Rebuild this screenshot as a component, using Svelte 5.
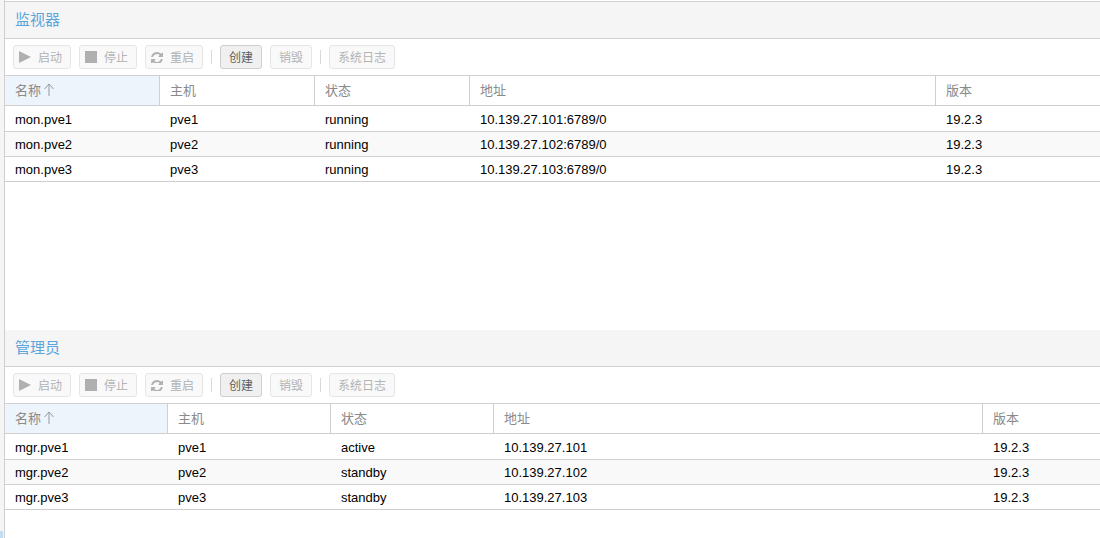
<script>
  const toolbar = [
    { label: '启动', icon: 'play', w: 58 },
    { label: '停止', icon: 'stop', w: 58 },
    { label: '重启', icon: 'refresh', w: 58 },
    { sep: true },
    { label: '创建', active: true, w: 42 },
    { label: '销毁', w: 42 },
    { sep: true },
    { label: '系统日志', w: 66 }
  ];

  const heads = ['名称', '主机', '状态', '地址', '版本'];

  const panels = [
    {
      title: '监视器',
      first: true,
      cols: '155px 155px 155px 466px 1fr',
      height: 330,
      rows: [
        ['mon.pve1', 'pve1', 'running', '10.139.27.101:6789/0', '19.2.3'],
        ['mon.pve2', 'pve2', 'running', '10.139.27.102:6789/0', '19.2.3'],
        ['mon.pve3', 'pve3', 'running', '10.139.27.103:6789/0', '19.2.3']
      ]
    },
    {
      title: '管理员',
      first: false,
      cols: '163px 163px 163px 489px 1fr',
      height: 208,
      rows: [
        ['mgr.pve1', 'pve1', 'active', '10.139.27.101', '19.2.3'],
        ['mgr.pve2', 'pve2', 'standby', '10.139.27.102', '19.2.3'],
        ['mgr.pve3', 'pve3', 'standby', '10.139.27.103', '19.2.3']
      ]
    }
  ];
</script>

<div class="page">
  <div class="edge"><div class="edge-mark"></div></div>
  <div class="content">
    {#each panels as panel}
      <section class="panel" class:first={panel.first} style="height: {panel.height}px; --cols: {panel.cols}">
        <h2 class="title">{panel.title}</h2>
        <div class="toolbar">
          {#each toolbar as item}
            {#if item.sep}
              <span class="sep"></span>
            {:else}
              <button class="btn" class:active={item.active} class:plain={!item.icon} style="width: {item.w}px">
                {#if item.icon === 'play'}
                  <svg width="12" height="12" viewBox="0 0 12 12"><path d="M0 0 L12 6 L0 12 Z" fill="#b0b0b0" /></svg>
                {:else if item.icon === 'stop'}
                  <svg width="12" height="12" viewBox="0 0 12 12"><rect width="12" height="12" fill="#b0b0b0" /></svg>
                {:else if item.icon === 'refresh'}
                  <svg width="12" height="12" viewBox="0 0 1536 1536"><path transform="translate(0 1408) scale(1 -1) translate(0 -128)" d="M1511 480q0 -5 -1 -7q-64 -268 -268 -434.5t-478 -166.5q-146 0 -282.5 55t-243.5 157l-129 -129q-19 -19 -45 -19t-45 19t-19 45v448q0 26 19 45t45 19h448q26 0 45 -19t19 -45t-19 -45l-137 -137q71 -66 161 -102t187 -36q134 0 250 65t186 179q11 17 53 117q8 23 30 23h192q13 0 22.500 -9.500t9.500 -22.500zM1536 1280v-448q0 -26 -19 -45t-45 -19h-448q-26 0 -45 19t-19 45t19 45l138 138q-148 137 -349 137q-134 0 -250 -65t-186 -179q-11 -17 -53 -117q-8 -23 -30 -23h-199q-13 0 -22.500 9.500t-9.500 22.500v7q65 268 270 434.500t480 166.500q146 0 284 -55.500t245 -156.500l130 129q19 19 45 19t45 -19t19 -45z" fill="#b0b0b0" /></svg>
                {/if}
                <span>{item.label}</span>
              </button>
            {/if}
          {/each}
        </div>
        <div class="row head">
          {#each heads as h, i}
            <div class="cell" class:sorted={i === 0}>
              {h}{#if i === 0}<svg class="arrow" width="10" height="14" viewBox="0 0 10 14"><path d="M5 1 V13 M0.5 6 L5 1 L9.500 6" fill="none" stroke="#999" stroke-width="1" /></svg>{/if}
            </div>
          {/each}
        </div>
        {#each panel.rows as row, r}
          <div class="row data" class:alt={r === 1}>
            {#each row as value}
              <div class="cell">{value}</div>
            {/each}
          </div>
        {/each}
      </section>
    {/each}
  </div>
</div>

<style>
  :global(body) {
    margin: 0;
    background: #fff;
  }

  .page {
    display: flex;
    height: 538px;
    overflow: hidden;
    font-family: "Liberation Sans", "Noto Sans CJK SC", sans-serif;
    font-size: 13px;
    color: #000;
  }

  .edge {
    flex: none;
    width: 4px;
    background: #f5f5f5;
    display: flex;
    flex-direction: column;
    justify-content: flex-end;
  }

  .edge-mark {
    width: 3px;
    height: 7px;
    background: #c2ddf2;
  }

  .content {
    flex: 1;
    min-width: 0;
    border-left: 1px solid #cfcfcf;
  }

  .panel {
    box-sizing: border-box;
    overflow: hidden;
  }

  .panel.first {
    padding-top: 1px;
  }

  .title {
    margin: 0;
    box-sizing: border-box;
    height: 37px;
    padding: 0 10px 4px;
    display: flex;
    align-items: center;
    background: #f5f5f5;
    border-bottom: 1px solid #cfcfcf;
    color: #5aa5dc;
    font-size: 15px;
    font-weight: normal;
  }

  .first .title {
    height: 38px;
    border-top: 1px solid #cfcfcf;
  }

  .toolbar {
    box-sizing: border-box;
    height: 36px;
    padding: 6px 8px;
    display: flex;
    align-items: flex-start;
    gap: 8px;
  }

  .btn {
    box-sizing: border-box;
    height: 24px;
    padding: 0 0 2px 5px;
    display: flex;
    align-items: center;
    gap: 7px;
    background: #f9f9f9;
    border: 1px solid #e6e6e6;
    border-radius: 3px;
    color: #b3b3b3;
    font: inherit;
    font-size: 12px;
  }

  .btn.plain {
    padding-left: 0;
    justify-content: center;
  }

  .btn svg {
    margin-top: 2px;
  }

  .btn.active {
    background: #f0f0f0;
    border-color: #cfcfcf;
    color: #5f5f5f;
  }

  .sep {
    flex: none;
    width: 1px;
    height: 14px;
    margin: 5px 0 0;
    background: #d9d9d9;
  }

  .row {
    display: grid;
    grid-template-columns: var(--cols);
    box-sizing: border-box;
    border-bottom: 1px solid #cfcfcf;
  }

  .head {
    height: 31px;
    border-top: 1px solid #cfcfcf;
    color: #8a8a8a;
  }

  .head .cell {
    border-right: 1px solid #cfcfcf;
    display: flex;
    align-items: center;
    padding: 0 10px 2px;
  }

  .head .cell:last-child {
    border-right: 0;
  }

  .head .sorted {
    background: #edf4fb;
  }

  .arrow {
    margin-left: 3px;
  }

  .data {
    height: 25px;
  }

  .head + .data {
    height: 26px;
  }

  .head + .data .cell {
    padding-top: 1px;
  }

  .data.alt {
    background: #f9f9f9;
  }

  .data .cell {
    padding: 0 11px 0 10px;
    line-height: 25px;
    white-space: nowrap;
  }

  .data .cell,
  .head .cell {
    box-sizing: border-box;
  }
</style>
